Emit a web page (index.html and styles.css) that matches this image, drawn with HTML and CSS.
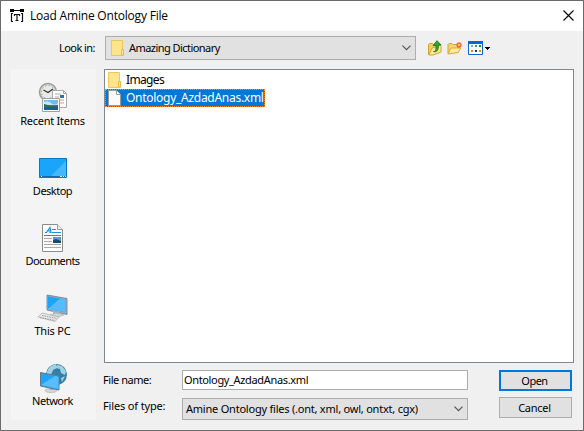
FILE: index.html
```
<!DOCTYPE html>
<html lang="en">
<head>
<meta charset="utf-8">
<title>Load Amine Ontology File</title>
<link rel="stylesheet" href="styles.css">
</head>
<body>
<div class="window">
  <header class="titlebar">
    <svg class="app-icon" width="14" height="14" viewBox="0 0 14 14"><path d="M0 0h4v1h6V0h4v3h-4V2H4v1H0z" fill="#000"/><path d="M3 4.500H1.500v8H3M11 4.500h1.500v8H11M4 5.500h6M7 5.500v6M5.500 11.500h3M4.500 5v2M9.500 5v2" fill="none" stroke="#111" stroke-width="1.200"/></svg>
    <h1 class="title"><span class="t-title">Load Amine Ontology File</span></h1>
    <svg class="close" width="11" height="11" viewBox="0 0 11 11"><path d="M.5.5l10 10M10.500.5l-10 10" stroke="#000" stroke-width="1.100"/></svg>
  </header>
  <div class="toolbar">
    <label class="look-label"><span class="t-look">Look in:</span></label>
    <div class="combo look-combo">
      <svg class="folder" width="13" height="16" viewBox="0 0 13 16"><path d="M.5.5h11v9h1v6H.5z" fill="#ffe48e" stroke="#eec856"/><path d="M10.500 15V9.500h2V15z" fill="#ffe9a2" stroke="#e7bd45"/></svg>
      <span class="t-dir">Amazing Dictionary</span>
      <svg class="chevron" width="9" height="6" viewBox="0 0 9 6"><path d="M.5.7l4 4 4-4" fill="none" stroke="#555" stroke-width="1.200"/></svg>
    </div>
    <div class="tools">
      <svg width="14" height="16" viewBox="0 0 14 16"><path d="M.5 14.500V4.500l1-1h3l1 1h6v8z" fill="#f2cf62" stroke="#cfa032"/><path d="M1 15l3-7 9-3v7l-8 3z" fill="#ffe995" stroke="#d4a535"/><path d="M5.500 11.500c2 0 2.500-1 2.500-6H5L9 .7l4 4.300h-2.500c0 5-1.500 7.500-5 6.500z" fill="#2eaa2b" stroke="#17711b" stroke-width=".8"/></svg>
      <svg width="16" height="14" viewBox="0 0 16 14"><path d="M1 12.500V3.500l1-1h3l1 1h5v8z" fill="#f4d372" stroke="#d1a43a"/><path d="M1 13l3-6h10l-3 4.500z" fill="#ffed9f" stroke="#d9ac40"/><path d="M12 1v6M9 4h6M10 2l4 4M14 2l-4 4" stroke="#f05b32" stroke-width="1.200"/><circle cx="12" cy="4" r="1.300" fill="#ffc65f"/></svg>
      <svg width="22" height="14" viewBox="0 0 22 14"><path d="M.5.5h14v13H.5z" fill="#fff" stroke="#0868ce"/><path d="M0 0h15v3H0z" fill="#0868ce"/><path d="M3 4h2v2H3z" fill="#a9a4c6"/><path d="M7 4h2v2H7z" fill="#3b8bdc"/><path d="M11 4h2v2h-2z" fill="#168a2c"/><path d="M3 9h2v2H3z" fill="#f07b65"/><path d="M7 9h2v2H7z" fill="#06338f"/><path d="M11 9h2v2h-2z" fill="#c79b16"/><path d="M17 6h5v1h-1v1h-1v1h-1V8h-1V7h-1z" fill="#000"/></svg>
    </div>
  </div>
  <div class="content">
    <nav class="places">
      <a class="place">
        <svg width="30" height="32" viewBox="0 0 30 32"><circle cx="10" cy="11" r="8.500" fill="#dededc" stroke="#999" stroke-width="1.500"/><circle cx="10" cy="11" r="6.500" fill="#e9e9e6" stroke="#777" stroke-dasharray=".8 2.600"/><path d="M5.500 9l4.500 2.500L15 8" fill="none" stroke="#333" stroke-width="1.200"/><path d="M14.500 9.500h11l3 3v14h-14z" fill="#fff" stroke="#aaa"/><path d="M25.500 9.500v3h3M17 13h6M17 16h4M17 19h9M17 22h9" fill="none" stroke="#aaa"/><path d="M22 14h4v3h-4z" fill="#2876a8"/><path d="M4.500 17.500h17v13h-17z" fill="#fff" stroke="#a0a0a0"/><path d="M6 19h14v10H6z" fill="#74b8ed"/><path d="M6 21q4-2 7 1t7 0v2H6z" fill="#c8e6f7"/><path d="M6 23q5 2 14 1v2H6z" fill="#2c6f5c"/><path d="M6 26h14v3H6z" fill="#155fa0"/></svg>
        <span class="t-recent">Recent Items</span>
      </a>
      <a class="place">
        <svg width="30" height="32" viewBox="0 0 30 32"><path d="M1.500 7.500h27v19h-27z" fill="#1aa5fb" stroke="#0878be"/><path d="M13 25L28 10v15z" fill="#46b8ff"/><path d="M2 25h26v1H2z" fill="#0c6cae"/><path d="M3 25h1v1H3zM22 25h2v1h-2zM25 25h1v1h-1zM27 25h1v1h-1z" fill="#fff"/></svg>
        <span class="t-desktop">Desktop</span>
      </a>
      <a class="place">
        <svg width="30" height="32" viewBox="0 0 30 32"><path d="M4.500 3.500h15l5 5v22h-20z" fill="#fff" stroke="#8b8b8b"/><path d="M19.500 3.500v5h5" fill="#eee" stroke="#999"/><path d="M7 11.500h1.500l3.500-5 1 5m-4-1.500h3.500M11.500 11.500h2" fill="none" stroke="#178bd1" stroke-width="1.200"/><path d="M14 8.500h4M14 11.500h9M6 14.500h17" stroke="#1c94d6"/><path d="M6 17.500h8M6 20.500h8M6 23.500h17M6 26.500h17" stroke="#aaa"/><path d="M15 16h8v6h-8z" fill="#5b9dcd"/><path d="M15 19l3-1 5 2v2h-8z" fill="#194c67"/></svg>
        <span class="t-docs">Documents</span>
      </a>
      <a class="place">
        <svg width="32" height="32" viewBox="0 0 32 32"><path d="M10 4l20 3.500v16L10 19z" fill="#a6b0b7" stroke="#697984" stroke-width=".8"/><path d="M11 5.200l17.500 3.200v13L11 17.800z" fill="#1ba3f8"/><path d="M11 17.800L23 7.500l5.500 1v13z" fill="#57bbff"/><path d="M16 20l6 1v3l-6-1z" fill="#aeb8be"/><path d="M13 24l6-2 8 2-6 2z" fill="#d2d7da" stroke="#9aa3aa" stroke-width=".5"/><path d="M1 26l4-4 17 4-4 4.500z" fill="#e8e8e8" stroke="#aaa" stroke-width=".7"/><path d="M3 26.500l15 3M5 24.500l15 3" stroke="#999" stroke-dasharray="1.500 1"/></svg>
        <span class="t-pc">This PC</span>
      </a>
      <a class="place">
        <svg width="30" height="32" viewBox="0 0 30 32"><circle cx="18.500" cy="13.500" r="10.500" fill="#347fa8"/><path d="M9 11q2-7 9-8l1 4-4 2-2 5H9zM19 4l5 1 4 5-1 4-4-2-1-4-4-1zM23 17l4-2-3 6z" fill="#a4d0df"/><ellipse cx="13" cy="29.500" rx="6" ry="2" fill="#d4d8db" stroke="#a2abb0" stroke-width=".6"/><path d="M11 25l5 1v3h-4z" fill="#a8b0b5"/><path d="M2.500 11.500L21 15v14L2.500 25z" fill="#1da4f8" stroke="#697783"/><path d="M3 24L17 15l3.500.700V28z" fill="#57bdff"/></svg>
        <span class="t-net">Network</span>
      </a>
    </nav>
    <main class="panel">
      <div class="file-list">
        <div class="file"><svg width="13" height="16" viewBox="0 0 13 16"><path d="M.5.5h11v9h1v6H.5z" fill="#ffe48e" stroke="#eec856"/><path d="M10.500 15V9.500h2V15z" fill="#ffe9a2" stroke="#e7bd45"/></svg><span class="t-images">Images</span></div>
        <div class="file selected"><svg width="13" height="16" viewBox="0 0 13 16"><path d="M.5.5h8l4 4v11H.5z" fill="#fafafa" stroke="#999"/><path d="M8.500.5v4h4" fill="#fff" stroke="#999"/></svg><span class="t-ontology">Ontology_AzdadAnas.xml</span></div>
      </div>
      <div class="form">
        <div class="labels"><label><span class="t-name">File name:</span></label><label><span class="t-type">Files of type:</span></label></div>
        <div class="fields">
          <div class="field"><span class="t-field">Ontology_AzdadAnas.xml</span></div>
          <div class="combo type-combo"><span class="t-types">Amine Ontology files (.ont, xml, owl, ontxt, cgx)</span><svg class="chevron" width="9" height="6" viewBox="0 0 9 6"><path d="M.5.7l4 4 4-4" fill="none" stroke="#555" stroke-width="1.200"/></svg></div>
        </div>
        <div class="buttons"><button class="default"><span class="t-open">Open</span></button><button><span class="t-cancel">Cancel</span></button></div>
      </div>
    </main>
  </div>
</div>
</body>
</html>
```
FILE: styles.css
```
* { box-sizing: border-box; }
body { margin: 0; font: 11px/16px "Noto Sans", sans-serif; color: #000; }
svg { display: block; flex: none; }
span { white-space: nowrap; }
.window { width: 584px; height: 431px; border: 1px solid #6c6a6b; background: #f0f0f0; }
.titlebar { height: 30px; display: flex; align-items: center; padding: 0 9px 1px 9px; background: #fff; }
.title { flex: 1; margin: 0 0 0 6px; font: 12px/16px "Open Sans", sans-serif; }
.toolbar { height: 38px; display: flex; align-items: flex-start; padding-top: 5px; }
.look-label { width: 104px; padding: 4px 0 0 58px; }
.combo { display: flex; align-items: center; border: 1px solid #adadad; background: #e1e1e1; }
.combo .chevron { margin-left: auto; }
.look-combo { width: 311px; height: 24px; padding: 0 4px 0 5px; gap: 5px; }
.tools { display: flex; align-items: center; gap: 5px; height: 24px; margin-left: 12px; }
.content { display: flex; }
.places { width: 85px; height: 351px; margin-left: 10px; background: #f4f4f4; }
.place { display: flex; flex-direction: column; align-items: center; height: 70px; padding: 12px 2px 0 0; }
.place span { line-height: 16px; }
.panel { width: 470px; margin-left: 8px; }
.file-list { height: 294px; border: 1px solid #828790; background: #fff; padding-top: 1px; font-size: 12px; }
.file { width: 160px; height: 18px; display: flex; align-items: center; gap: 5px; padding-left: 3px; }
.selected { background: #0078d7; color: #fff; border: 1px dotted #ff8728; padding-left: 2px; }
.form { display: flex; padding-top: 7px; }
.labels { width: 79px; display: flex; flex-direction: column; gap: 10px; padding-top: 2px; margin-left: -1px; }
.labels label { display: block; height: 16px; }
.fields { width: 286px; display: flex; flex-direction: column; gap: 8px; }
.field { height: 20px; padding: 1px; border: 1px solid #abadb3; background: #fff; }
.type-combo { height: 22px; padding: 0 4px 0 3px; }
.buttons { margin-left: 31px; display: flex; flex-direction: column; gap: 6px; }
button { width: 73px; height: 21px; padding: 0; font: inherit; color: #000; background: #e1e1e1; border: 1px solid #adadad; }
button.default { border: 2px solid #0078d7; }
button span { display: block; line-height: 17px; margin-left: -2px; }

/* Compact tracking for the dialog's labels */
.t-title { letter-spacing: -.2px; }
.t-look { letter-spacing: -.55px; }
.t-dir { letter-spacing: -.55px; }
.t-recent { letter-spacing: -.25px; }
.t-desktop { letter-spacing: -.5px; }
.t-docs { letter-spacing: -.6px; }
.t-pc { letter-spacing: -.2px; }
.t-net { letter-spacing: -.5px; }
.t-images { letter-spacing: -.65px; }
.t-ontology { letter-spacing: -.28px; }
.t-name { letter-spacing: -.45px; }
.t-type { letter-spacing: -.15px; }
.t-field { letter-spacing: -.35px; }
.t-types { letter-spacing: -.22px; }
.t-open { letter-spacing: -.5px; }
.t-cancel { letter-spacing: -.25px; }
```
